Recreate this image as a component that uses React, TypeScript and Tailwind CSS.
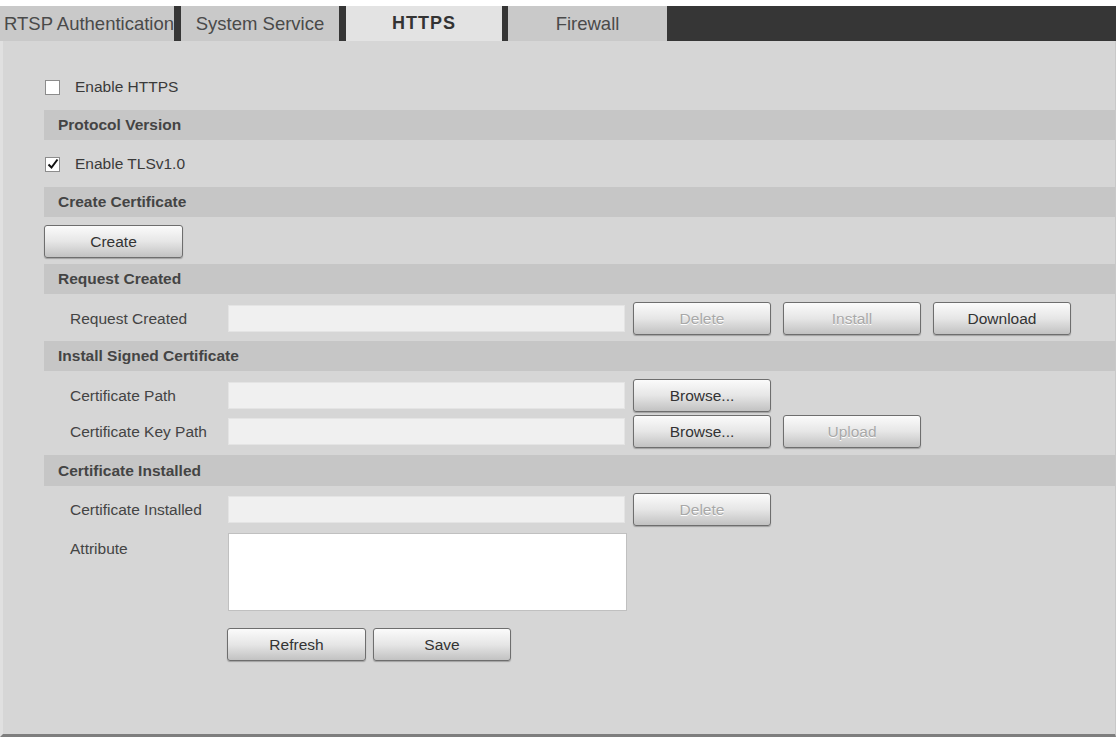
import React from "react";

const font = { fontFamily: '"Liberation Sans", Arial, sans-serif' };

function Btn({ label, disabled, w = "w-[138px]" }: { label: string; disabled?: boolean; w?: string }) {
  return (
    <div
      className={`${w} h-[33px] shrink-0 flex items-center justify-center rounded-[3px] border border-[#6e6e6e] bg-gradient-to-b from-[#fbfbfb] via-[#e6e6e6] to-[#c2c2c2] text-[15.5px] shadow-[0_1px_1px_rgba(0,0,0,0.25)] ${
        disabled ? "text-[#a8a8a8] [text-shadow:0_1px_0_#fff]" : "text-[#333]"
      }`}
    >
      {label}
    </div>
  );
}

function Header({ label, h = "h-[30px]" }: { label: string; h?: string }) {
  return (
    <div className={`${h} bg-[#c6c6c6] flex items-center pl-[14px] text-[15.5px] font-bold text-[#444]`}>
      {label}
    </div>
  );
}

function Checkbox({ checked }: { checked?: boolean }) {
  return (
    <div className="w-[15px] h-[15px] bg-white border border-[#8c8c8c] flex items-center justify-center">
      {checked && (
        <svg width="12" height="12" viewBox="0 0 12 12">
          <path d="M1.5 6.5 L4.5 9.5 L10.5 1.5" fill="none" stroke="#111" strokeWidth="2" />
        </svg>
      )}
    </div>
  );
}

function Input() {
  return <div className="w-[397px] h-[27px] bg-[#f0f0f0] border border-[#e4e4e4] shrink-0" />;
}

function Row({ label, children, mt }: { label: string; children: React.ReactNode; mt: string }) {
  return (
    <div className={`${mt} h-[33px] flex items-center`}>
      <div className="w-[184px] pl-[26px] text-[15.5px] text-[#444] shrink-0 whitespace-nowrap">{label}</div>
      {children}
    </div>
  );
}

export default function App() {
  return (
    <div className="w-[1120px] h-[740px] bg-white" style={font}>
      <div className="w-[1116px] pt-[6px]">
        <div className="h-[35px] flex bg-[#363636] text-[18.5px] text-[#4a4a4a]">
          <div className="w-[174px] bg-[#c9c9c9] flex items-center pl-[4px] whitespace-nowrap overflow-hidden">RTSP Authentication</div>
          <div className="w-[7px]" />
          <div className="w-[158px] bg-[#c9c9c9] flex items-center justify-center whitespace-nowrap">System Service</div>
          <div className="w-[7px]" />
          <div className="w-[156px] bg-[#e3e3e3] flex items-center justify-center font-bold text-[#333] text-[18px] tracking-[1px]">HTTPS</div>
          <div className="w-[6px]" />
          <div className="w-[159px] bg-[#c9c9c9] flex items-center justify-center">Firewall</div>
        </div>
        <div className="h-[696px] bg-[#d6d6d6] border-l-[3px] border-l-[#e0e0e0] border-r border-r-[#c8c8c8] border-b-[3px] border-b-[#7e7e7e] pl-[41px] flex flex-col">
          <div className="mt-[31px] h-[30px] flex items-center gap-[15px] pl-[1px] text-[15.5px] text-[#3a3a3a]">
            <Checkbox />
            <span>Enable HTTPS</span>
          </div>
          <div className="mt-[8px]"><Header label="Protocol Version" /></div>
          <div className="mt-[9px] h-[30px] flex items-center gap-[15px] pl-[1px] text-[15.5px] text-[#3a3a3a]">
            <Checkbox checked />
            <span>Enable TLSv1.0</span>
          </div>
          <div className="mt-[8px]"><Header label="Create Certificate" /></div>
          <div className="mt-[8px] flex">
            <Btn label="Create" w="w-[139px]" />
          </div>
          <div className="mt-[6px]"><Header label="Request Created" /></div>
          <Row label="Request Created" mt="mt-[8px]">
            <Input />
            <div className="ml-[8px] flex gap-[12px]">
              <Btn label="Delete" disabled />
              <Btn label="Install" disabled />
              <Btn label="Download" />
            </div>
          </Row>
          <div className="mt-[6px]"><Header label="Install Signed Certificate" /></div>
          <Row label="Certificate Path" mt="mt-[8px]">
            <Input />
            <div className="ml-[8px] flex">
              <Btn label="Browse..." />
            </div>
          </Row>
          <Row label="Certificate Key Path" mt="mt-[3px]">
            <Input />
            <div className="ml-[8px] flex gap-[12px]">
              <Btn label="Browse..." />
              <Btn label="Upload" disabled />
            </div>
          </Row>
          <div className="mt-[7px]"><Header label="Certificate Installed" h="h-[31px]" /></div>
          <Row label="Certificate Installed" mt="mt-[7px]">
            <Input />
            <div className="ml-[8px] flex">
              <Btn label="Delete" disabled />
            </div>
          </Row>
          <div className="mt-[7px] flex">
            <div className="w-[184px] pl-[26px] pt-[4px] text-[15.5px] text-[#444] shrink-0">Attribute</div>
            <div className="w-[399px] h-[78px] bg-white border border-[#c0c0c0]" />
          </div>
          <div className="mt-[17px] flex pl-[183px] gap-[7px]">
            <Btn label="Refresh" w="w-[139px]" />
            <Btn label="Save" w="w-[138px]" />
          </div>
        </div>
      </div>
    </div>
  );
}
